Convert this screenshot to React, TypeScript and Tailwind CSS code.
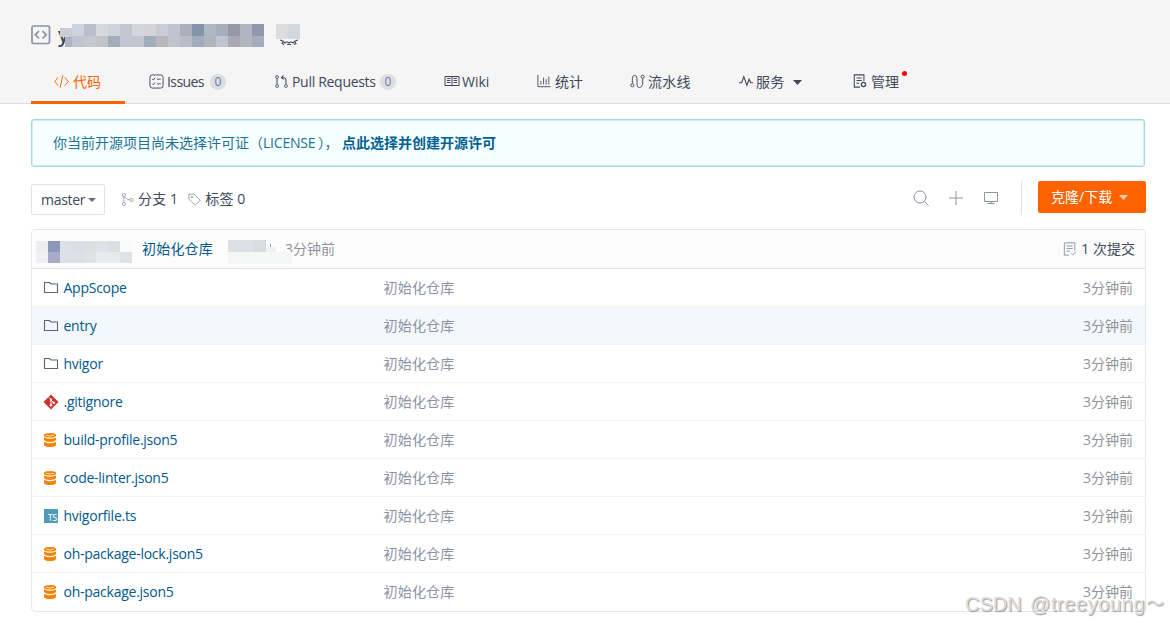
import type { ReactNode } from "react";
import clsx from "clsx";

type FileKind = "folder" | "git" | "json" | "ts";

const files: { name: string; kind: FileKind }[] = [
  { name: "AppScope", kind: "folder" },
  { name: "entry", kind: "folder" },
  { name: "hvigor", kind: "folder" },
  { name: ".gitignore", kind: "git" },
  { name: "build-profile.json5", kind: "json" },
  { name: "code-linter.json5", kind: "json" },
  { name: "hvigorfile.ts", kind: "ts" },
  { name: "oh-package-lock.json5", kind: "json" },
  { name: "oh-package.json5", kind: "json" },
];

const titleTop = ["#cbd4dd", "#b8bfc8", "#d5d8df", "#cfd3db", "#c2c6cf", "#d2d5db", "#d4d4d7", "#c8ccd7", "#c1c4ce", "#acafbc", "#8394a8", "#afb7bf", "#a5aebb", "#9698a6", "#afb5bf", "#9198ad"];
const titleBottom = ["#bec5d1", "#c4c8d1", "#c0c3ca", "#a3adb9", "#c3c6d0", "#c3c6cf", "#a2adbc", "#bbb6bb", "#c0c4cf", "#b8bdc9", "#a0adbf", "#afb5be", "#bec5d1", "#aaa8b3", "#b0b6bf", "#a5acbb"];
const userTop = ["#ededf1", "#8b98bb", "#dce0e7", "#d9dee4", "#dbdfe2", "#e0e1e9", "#dbdfe3", "#f9fafa"];
const userBottom = ["#eff0f3", "#a9abc9", "#dce0e8", "#dce0e6", "#e0e1e4", "#e8e9eb", "#e8e9eb", "#dee2e5"];

const Svg = ({ children, className, box = 16 }: { children: ReactNode; className?: string; box?: number }) => (
  <svg viewBox={`0 0 ${box} ${box}`} fill="none" stroke="currentColor" className={clsx("shrink-0", className)}>
    {children}
  </svg>
);

const Caret = ({ className }: { className?: string }) => (
  <svg viewBox="0 0 8 5" fill="currentColor" preserveAspectRatio="none" className={clsx("shrink-0", className)}>
    <path d="M0 0h8L4 5z" />
  </svg>
);

const FileIcon = ({ kind }: { kind: FileKind }) => {
  if (kind === "folder") {
    return (
      <Svg className="size-4 text-[#56657a]">
        <path d="M1.5 12.5v-10h5l1.5 1.5h6.5v8.5z" strokeWidth="1.1" />
      </Svg>
    );
  }
  if (kind === "git") {
    return (
      <Svg className="size-4">
        <path d="M8 .5 15.5 8 8 15.5.5 8z" fill="#d0312f" stroke="none" />
        <path d="M6 3.5 8 5.5v6M8 6l3 3" stroke="#fff" />
        <circle cx="8" cy="5.7" r="1.2" fill="#fff" stroke="none" />
        <circle cx="8" cy="11.3" r="1.2" fill="#fff" stroke="none" />
        <circle cx="10.8" cy="8.7" r="1.2" fill="#fff" stroke="none" />
      </Svg>
    );
  }
  if (kind === "ts") {
    return (
      <span className="ml-px flex h-[14px] w-[14px] items-end justify-end bg-[#519aba] pr-px text-[9px] leading-[10px] tracking-[-0.3px] text-white">
        TS
      </span>
    );
  }
  return (
    <svg viewBox="0 0 12 14" fill="#f98200" className="ml-px h-[14px] w-3 shrink-0">
      <path d="M0 2Q0 0 6 0T12 2V3Q11 4.6 6 4.6T0 3zM0 4.4Q6 7 12 4.4v2.4Q11 9 6 9T0 6.8zM0 8.9Q6 11.6 12 8.9V12Q11 14 6 14T0 12z" />
      <path d="M2 2.3Q6 3.8 10 2.3" fill="none" stroke="#fff" strokeWidth=".7" />
    </svg>
  );
};

const Latin = ({ children, className }: { children: string; className?: string }) => (
  <span className={clsx("whitespace-nowrap", className)}>{children}</span>
);

const Tab = ({ icon, children, width }: { icon: ReactNode; children: ReactNode; width: string }) => (
  <a className={clsx("flex h-10 shrink-0 items-center whitespace-nowrap", width)}>
    {icon}
    {children}
  </a>
);

const Count = () => (
  <span className="flex size-4 items-center justify-center rounded-full bg-[#dddee0] text-[12px] text-[#6779b0]">0</span>
);

const Mosaic = ({ rows, height }: { rows: string[][]; height: string }) => (
  <div>
    {rows.map((row, i) => (
      <div key={i} className="flex">
        {row.map((color, j) => (
          <span key={j} className={clsx("w-3 shrink-0", height)} style={{ backgroundColor: color }} />
        ))}
      </div>
    ))}
  </div>
);

const Header = () => (
  <header className="h-[104px] border-b border-[#dcddde] bg-[#f5f5f5] pl-[31px]">
    <div className="flex h-[62px] items-start pt-6">
      <Svg box={20} className="mt-px size-5 text-[#8c92a4]">
        <rect x="1" y="1" width="17.5" height="17.5" rx="1.5" strokeWidth="1.7" />
        <path d="m8 6-3.7 3.8L8 13.5M11.5 6l3.7 3.8-3.7 3.7" strokeWidth="1.7" />
      </Svg>
      <div className="relative ml-[7px] h-6 w-[206px]">
        <span className="absolute -top-px left-0 text-[20px] leading-6 font-semibold text-[#40485b]">y</span>
        <span className="absolute top-1 left-0.5 h-[9px] w-3 bg-[#cbcdd2]" />
        <span className="absolute top-[13px] left-[7px] h-[10px] w-[7px] bg-[#b0b2bd]" />
        <div className="absolute top-0 left-[14px]">
          <Mosaic rows={[titleTop, titleBottom]} height="h-[11.5px]" />
        </div>
      </div>
      <div className="relative ml-3 h-6 w-6">
        <Svg box={18} className="absolute top-1.5 left-1 size-[18px] text-[#40485b]">
          <path d="M0 10q4 1 5 3 2-2 4 0 2-2 4 0 1-2 5-3M3 12l-1 1.5 2 1M15 12l1 1.5-2 1M7 14.5h4" strokeWidth="1.1" />
        </Svg>
        <div className="absolute top-0 left-0 flex">
          <span className="h-[15px] w-3 bg-[#dcdcdc]" />
          <span className="h-[15px] w-3 bg-[#d3d7df]" />
        </div>
      </div>
    </div>
    <nav className="flex h-[42px] text-[#40485b]">
      <div className="flex h-[42px] w-[94px] shrink-0 border-b-[3px] border-[#fe6300] pl-[23px] text-[#fe6300]">
        <Tab
          width="w-[71px]"
          icon={
            <Svg className="mr-[4px] mb-0.5 size-[15px]">
              <path d="M4.5 3.5.8 8l3.7 4.5M11.5 3.5 15.2 8l-3.7 4.5M9.5 1.5l-3 13" />
            </Svg>
          }
        >
          代码
        </Tab>
      </div>
      <Tab
        width="ml-6 w-[126px]"
        icon={
          <Svg className="mr-[3px] mb-0.5 size-[15px]">
            <rect x="1" y="1" width="14" height="14" rx="2.5" />
            <path d="m3.5 5.5 1 1 2-2.5m-3 6.5 1 1 2-2.5M8.5 5.5h4M8.5 10.5h4" />
          </Svg>
        }
      >
        <Latin className="w-[43px] tracking-[-0.6px]">Issues</Latin>
        <Count />
      </Tab>
      <Tab
        width="w-[169px]"
        icon={
          <Svg className="mr-[4px] mb-0.5 size-[13px]">
            <circle cx="2.5" cy="2.5" r="1.8" />
            <circle cx="2.5" cy="13.5" r="1.8" />
            <circle cx="13.5" cy="13.5" r="1.8" />
            <path d="M2.5 4.5v7M13.5 11.5V6q0-3-5-3M10.5.5 8 3l2.5 2.5" strokeWidth="1.3" />
          </Svg>
        }
      >
        <Latin className="w-[88px] tracking-[-0.3px]">Pull Requests</Latin>
        <Count />
      </Tab>
      <Tab
        width="w-[93px]"
        icon={
          <Svg className="mr-[2px] mb-0.5 size-[16px]">
            <path d="M1 3.5h14v9H1zM8 3.5v9M3 5.5h3.5M3 7.5h3.5M3 9.5h3.5M9.5 5.5H13M9.5 7.5H13M9.5 9.5H13" />
          </Svg>
        }
      >
        <Latin>Wiki</Latin>
      </Tab>
      <Tab
        width="w-[93px]"
        icon={
          <Svg className="mr-[4px] mb-0.5 size-[14px]">
            <path d="M1 1v13.5h14.5M4.5 12V8M7.5 12V4M10.5 12V6M13.5 12V3" />
          </Svg>
        }
      >
        统计
      </Tab>
      <Tab
        width="w-[109px]"
        icon={
          <Svg className="mr-[3px] mb-0.5 size-[15px]">
            <circle cx="2.5" cy="12" r="1.7" />
            <circle cx="13.5" cy="3" r="1.7" />
            <path d="M2.5 10V5q0-3.5 2.5-3.5T7.5 5v6q0 3.5 2.5 3.5t3.5-3.5V5" />
          </Svg>
        }
      >
        <span className="tracking-[0.3px]">流水线</span>
      </Tab>
      <Tab
        width="w-[114px]"
        icon={
          <Svg className="mr-[3px] mb-0.5 size-[14px]">
            <path d="M0 10h3l2.5-7 3.5 10 2.5-7 2 4H16" strokeWidth="1.3" />
          </Svg>
        }
      >
        <span className="tracking-[0.3px]">服务</span>
        <Caret className="ml-2 h-[5px] w-[9px]" />
      </Tab>
      <Tab
        width="w-[50px]"
        icon={
          <Svg className="mr-[4px] mb-0.5 size-[14px]">
            <path d="M8 15H1.5V1h11v7M4 4.5h6M4 7.5h6M4 10.5h3" strokeWidth="1.2" />
            <circle cx="12" cy="12" r="2.4" strokeWidth="1.5" />
          </Svg>
        }
      >
        管理
      </Tab>
      <span className="mt-[9px] -ml-px size-[5px] rounded-full bg-[#f00]" />
    </nav>
  </header>
);

const Toolbar = () => (
  <div className="mt-[14px] flex h-[36px] items-start">
    <button className="mt-[3px] flex h-[31px] w-[74px] items-center rounded-[2px] border border-[#dbe5ee] pl-[9px] text-[#40485b]">
      <Latin className="w-[47px] text-left tracking-[-0.3px]">master</Latin>
      <Caret className="h-[4px] w-[8px] text-[#656d7c]" />
    </button>
    <div className="mt-[7px] ml-4 flex h-[22px] items-center tracking-[0.15px] text-[#40485b]">
      <Svg className="mr-[4px] size-[13px] text-[#8c92a4]">
        <circle cx="3.5" cy="2.5" r="2" />
        <circle cx="3.5" cy="13.5" r="2" />
        <circle cx="13" cy="8.5" r="2" />
        <path d="M3.5 4.5v7M4.5 4.5q2 4 6.5 4" />
      </Svg>
      分支 1
      <Svg className="mr-[4px] ml-[10px] size-[13px] text-[#8c92a4]">
        <path d="M1 1.5h6.5L15 9l-6 6L1 7.5z" />
        <circle cx="4.7" cy="5" r="1" />
      </Svg>
      标签 0
    </div>
    <div className="ml-auto flex items-start text-[#8c92a4]">
      <Svg className="mt-[9px] size-4">
        <circle cx="7" cy="7" r="6" />
        <path d="m11.5 11.5 4 4" />
      </Svg>
      <Svg className="mt-[9px] ml-[19px] size-4">
        <path d="M8 1v14M1 8h14" />
      </Svg>
      <Svg className="mt-[9px] ml-[19px] size-4">
        <path d="M1.5 2.5h13v9h-13zM8 11.5v2M4.5 13.5h7" />
      </Svg>
      <span className="ml-[22px] h-[34px] w-px bg-[#dbe2e8]" />
      <button className="ml-4 flex h-8 w-[108px] items-center rounded-[2px] bg-[#fe6300] pl-[13px] text-white">
        克隆/下载
        <Caret className="ml-[7px] h-[5px] w-[9px] text-[#ffd0b0]" />
      </button>
    </div>
  </div>
);

const App = () => (
  <div className="relative h-[624px] w-[1170px] overflow-hidden bg-white font-['Open_Sans','Noto_Sans_CJK_SC',sans-serif] text-[14px] leading-5">
    <Header />
    <main className="mr-[24px] ml-[31px] pt-[15px]">
      <div className="mr-px flex h-[48px] items-center rounded-[3px] border border-[#a3d8e2] bg-[#f6ffff] pl-[21px] whitespace-nowrap text-[#1c7293] shadow-[inset_0_0_0_1px_#d3ebf1]">
        你当前开源项目尚未选择许可证（
        <Latin className="w-[55px] tracking-[-0.2px]">LICENSE</Latin>
        <span className="w-[24px] tracking-[-0.5px]">），</span>
        <b className="font-bold text-[#005f94]">点此选择并创建开源许可</b>
      </div>
      <Toolbar />
      <section className="mt-[12px] h-[383px] overflow-hidden rounded-[4px] border border-[#dfe8ef]">
        <div className="flex h-[38px] items-center bg-[#fcfcfc] pr-[10px] text-[#40485b]">
          <div className="mt-[6px] ml-1">
            <Mosaic rows={[userTop, userBottom]} height="h-[11px]" />
          </div>
          <span className="ml-[10px] tracking-[0.2px] text-[#00598c]">初始化仓库</span>
          <div className="relative ml-[15px] h-6 w-[63px]">
            <span className="absolute top-[3px] left-0 h-3 w-[26px] bg-[#dde0e5]" />
            <span className="absolute top-[3px] left-[26px] h-3 w-[12px] bg-[#d7dce0]" />
            <span className="absolute top-[10px] left-[38px] h-[5px] w-[10px] bg-[#eef0f2]" />
            <span className="absolute top-[15px] left-0 h-[12px] w-[64px] bg-[#f5f6f6]" />
            <span className="absolute top-[7px] left-[42px] h-[3px] w-px bg-[#929da7]" />
          </div>
          <span className="-ml-[6px] text-[#909399]">3分钟前</span>
          <Svg className="mr-1 ml-auto size-[14px] text-[#8c92a4]">
            <path d="M7 15H1.5V1h12v9M4 4.5h7M4 7.5h7M4 10.5h4M9 13l2 2 4-4" strokeWidth="1.1" />
          </Svg>
          1 次提交
        </div>
        {files.map((file) => (
          <div
            key={file.name}
            className={clsx(
              "flex h-[38px] items-center border-t pr-3 pl-[11px]",
              file.name === "AppScope" ? "border-[#dbe5ee]" : "border-[#eff4f7]",
              file.name === "entry" && "bg-[#f3f8fc]",
            )}
          >
            <div className="flex w-[340px] shrink-0 items-center text-[#00598c]">
              <span className="mr-[5px] flex w-4">
                <FileIcon kind={file.kind} />
              </span>
              <Latin className="-ml-[0.5px] tracking-[-0.25px]">{file.name}</Latin>
            </div>
            <span className="ml-[0.5px] tracking-[0.2px] text-[#8c92a4]">初始化仓库</span>
            <span className="ml-auto text-[#909399]">3分钟前</span>
          </div>
        ))}
      </section>
    </main>
    <div className="absolute top-[592px] left-[965px] flex text-[20px] leading-6 whitespace-nowrap text-[#dedede] [font-family:'Liberation_Sans','Noto_Sans_CJK_SC',sans-serif] [text-shadow:1px_1px_1px_#999]">
      <span className="w-[65px]">CSDN</span>
      <span className="w-[116px] tracking-[0.6px]">@treeyoung</span>
      <span className="text-[18px]">～</span>
    </div>
  </div>
);

export default App;
